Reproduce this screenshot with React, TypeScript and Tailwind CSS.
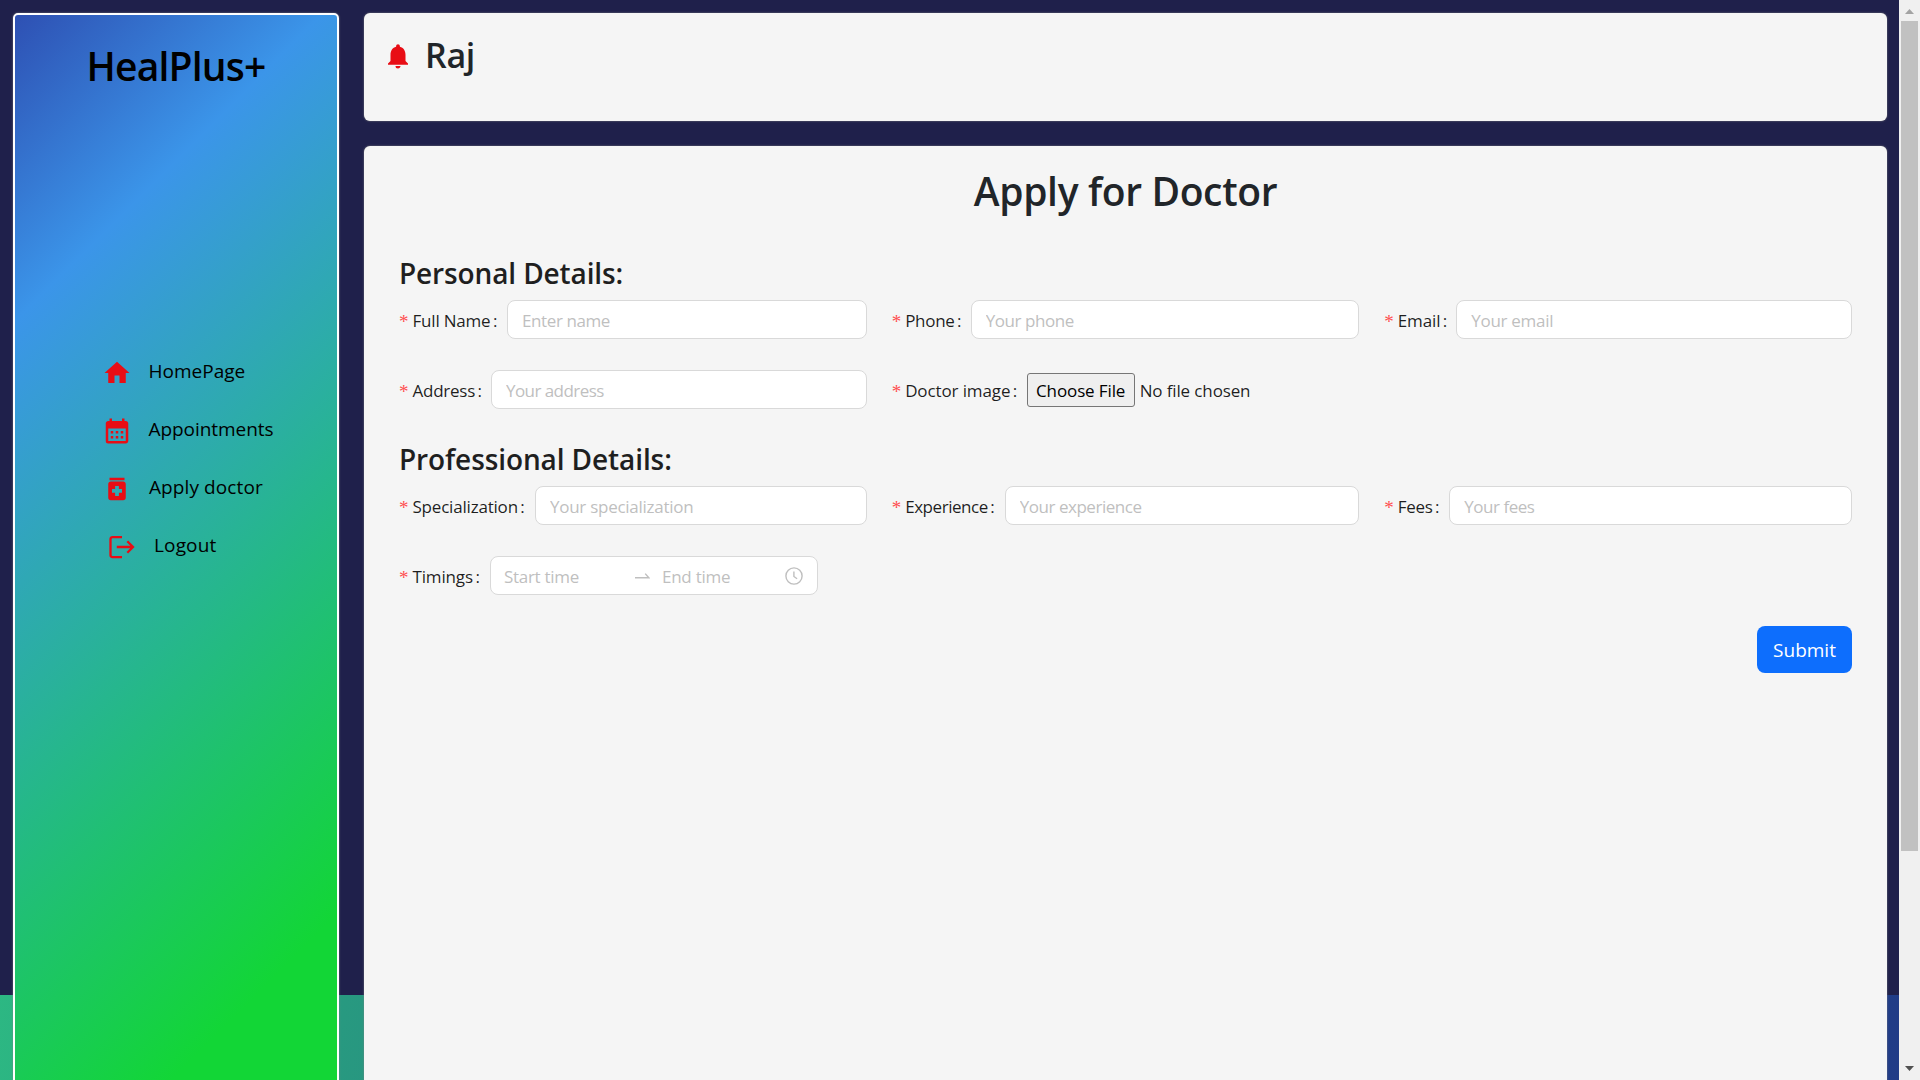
import React from "react";
import { MdCalendarMonth, MdHome, MdMedication, MdNotifications } from "react-icons/md";

type FieldProps = {
  label: string;
  labelWidth: string;
  labelTracking: string;
  placeholder?: string;
  inputTracking?: string;
  children?: React.ReactNode;
};

function Field({ label, labelWidth, labelTracking, placeholder, inputTracking = "", children }: FieldProps) {
  return (
    <div className="flex h-[39px] items-center">
      <label className={`flex h-full shrink-0 items-center text-[17px] leading-[26px] text-black/88 ${labelWidth}`}>
        <span className="w-[13.5px] pt-[5px] font-['Liberation_Serif',serif] text-[19px] leading-[22px] text-[#ff4d4f]">*</span>
        <span className={`pt-[2px] whitespace-nowrap ${labelTracking}`}>{label}</span>
        <span className="ml-[2.5px] pt-[2px]">:</span>
      </label>
      {children ?? (
        <input
          placeholder={placeholder}
          className={`h-[39px] min-w-0 flex-1 rounded-[8px] border border-[#d9d9d9] bg-white px-[14px] pt-[2px] text-[17px] placeholder:text-[#bfbfbf] ${inputTracking}`}
        />
      )}
    </div>
  );
}

function LogoutIcon() {
  return (
    <svg width="36" height="30" viewBox="0 0 36 30" fill="none" stroke="#e80d15" strokeWidth="2.3">
      <path d="M20 5.1H10.5a2 2 0 0 0-2 2v16a2 2 0 0 0 2 2H20" />
      <path d="M14.8 15H31M25.3 9.3 31 15l-5.7 5.7" />
    </svg>
  );
}

const nav = [
  { label: "HomePage", gap: "ml-[16.5px]", icon: <MdHome size={30} color="#e80d15" /> },
  { label: "Appointments", gap: "ml-[16.5px] tracking-[-0.06px]", icon: <MdCalendarMonth size={30} color="#e80d15" /> },
  { label: "Apply doctor", gap: "ml-[17px] tracking-[0.1px]", icon: <MdMedication size={30} color="#e80d15" /> },
  { label: "Logout", gap: "ml-[16px] tracking-[0.15px]", icon: <LogoutIcon /> },
];

function Sidebar() {
  return (
    <aside className="h-[1199px] w-[326px] shrink-0 rounded-[5px] border-2 border-white bg-[linear-gradient(135deg,#2e50b3_0px,#3b95e9_217px,#12d636_864px)] pt-[27px] text-black shadow-[0_0_2px_gray]">
      <h1 className="text-center text-[39px] leading-[48px] font-semibold tracking-[-0.8px]">HealPlus+</h1>
      <nav className="mt-[268px] flex flex-col gap-[28px] pl-[87px]">
        {nav.map((n) => (
          <a key={n.label} className="flex h-[30px] items-start">
            {n.icon}
            <span className={`text-[19px] leading-[26px] ${n.gap}`}>{n.label}</span>
          </a>
        ))}
      </nav>
    </aside>
  );
}

function TimeRange() {
  return (
    <div className="flex h-[39px] w-[328px] items-center rounded-[8px] border border-[#d9d9d9] bg-white pl-[13px] text-[17px] text-[#bfbfbf]">
      <span className="w-[131px] pt-[2px] tracking-[-0.3px]">Start time</span>
      <svg width="15" height="10" viewBox="0 0 15 10" fill="none" stroke="#bfbfbf" strokeWidth="1.4" className="mt-px">
        <path d="M0 6.8h13.8L10.2 2.6" />
      </svg>
      <span className="ml-[12px] w-[123px] pt-[2px] tracking-[-0.25px]">End time</span>
      <svg width="18" height="18" viewBox="0 0 18 18" fill="none" stroke="#bfbfbf" strokeWidth="1.4">
        <circle cx="9" cy="9" r="8.1" />
        <path d="M8.9 4.5v5l3.2 2.3" />
      </svg>
    </div>
  );
}

function Scrollbar() {
  return (
    <div className="flex h-full w-[21px] shrink-0 flex-col items-center bg-[#f0f0f0]">
      <svg width="9" height="5" viewBox="0 0 9 5" className="mt-[9px] ml-[-1px]">
        <path d="M4.5 0 9 5H0z" fill="#a3a3a3" />
      </svg>
      <div className="mt-[7px] mr-[1px] h-[830px] w-[17px] bg-[#c1c1c1]" />
      <svg width="9" height="5" viewBox="0 0 9 5" className="mt-auto mb-[9px] ml-[-1px]">
        <path d="M0 0h9L4.5 5z" fill="#505050" />
      </svg>
    </div>
  );
}

export default function App() {
  return (
    <div className="flex h-screen w-full overflow-hidden bg-[linear-gradient(100deg,#2dba83_0%,#2dba83_7%,#289a80_24%,#203b87_99%)] font-['Open_Sans','Noto_Sans',sans-serif]">
      <div className="h-[995px] flex-1 bg-[#1f204b]">
        <div className="flex items-start gap-[25px] pt-[13px] pr-[12px] pl-[13px]">
          <Sidebar />
          <div className="flex min-w-0 flex-1 flex-col gap-[25px]">
            <header className="flex h-[108px] items-start rounded-[6px] bg-[#f5f5f5] pt-[21px] pl-[19px] shadow-[0_0_2px_gray]">
              <MdNotifications size={30} color="#e80d15" className="mt-[7px]" />
              <span className="ml-[12px] pt-px text-[34px] leading-[40px] font-semibold tracking-[-0.3px] text-[#212529]">Raj</span>
            </header>
            <main className="h-[1066px] rounded-[6px] bg-[#f5f5f5] pt-[21px] pr-[35px] pl-[35px] shadow-[0_0_2px_gray]">
              <h1 className="text-center text-[39px] leading-[48px] font-semibold tracking-[-0.35px] text-[#212529]">Apply for Doctor</h1>
              <h4 className="mt-[40px] text-[28px] leading-[36px] font-semibold tracking-[-0.12px] text-[#1f1f1f]">Personal Details:</h4>
              <div className="mt-[9px] grid grid-cols-3 gap-x-[25px] gap-y-[31px]">
                <Field label="Full Name" labelWidth="w-[108px]" labelTracking="tracking-[-0.2px]" placeholder="Enter name" inputTracking="tracking-[-0.4px]" />
                <Field label="Phone" labelWidth="w-[79px]" labelTracking="tracking-[-0.3px]" placeholder="Your phone" inputTracking="tracking-[-0.43px]" />
                <Field label="Email" labelWidth="w-[72px]" labelTracking="tracking-[-0.15px]" placeholder="Your email" inputTracking="tracking-[-0.3px]" />
                <Field label="Address" labelWidth="w-[92px]" labelTracking="tracking-[-0.25px]" placeholder="Your address" inputTracking="tracking-[-0.56px]" />
                <Field label="Doctor image" labelWidth="w-[135px]" labelTracking="tracking-[-0.12px]">
                  <button className="h-[34px] w-[108px] rounded-[3px] border border-[#767676] bg-[#efefef] pt-[2px] text-[17px] leading-[26px] tracking-[-0.12px] text-black">
                    Choose File
                  </button>
                  <span className="ml-[5px] pt-[2px] text-[17px] tracking-[-0.13px] text-black/88">No file chosen</span>
                </Field>
              </div>
              <h4 className="mt-[32px] text-[28px] leading-[36px] font-semibold tracking-[-0.1px] text-[#1f1f1f]">Professional Details:</h4>
              <div className="mt-[9px] grid grid-cols-3 gap-x-[25px] gap-y-[31px]">
                <Field label="Specialization" labelWidth="w-[136px]" labelTracking="tracking-[-0.2px]" placeholder="Your specialization" inputTracking="tracking-[-0.27px]" />
                <Field label="Experience" labelWidth="w-[113px]" labelTracking="tracking-[-0.45px]" placeholder="Your experience" inputTracking="tracking-[-0.46px]" />
                <Field label="Fees" labelWidth="w-[65px]" labelTracking="tracking-[-0.35px]" placeholder="Your fees" inputTracking="tracking-[-0.48px]" />
                <Field label="Timings" labelWidth="w-[91px]" labelTracking="tracking-[-0.15px]">
                  <TimeRange />
                </Field>
              </div>
              <div className="mt-[31px] flex justify-end">
                <button className="h-[47px] w-[95px] rounded-[8px] bg-[#0d6efd] pt-px text-[19px] text-white">Submit</button>
              </div>
            </main>
          </div>
        </div>
      </div>
      <Scrollbar />
    </div>
  );
}
